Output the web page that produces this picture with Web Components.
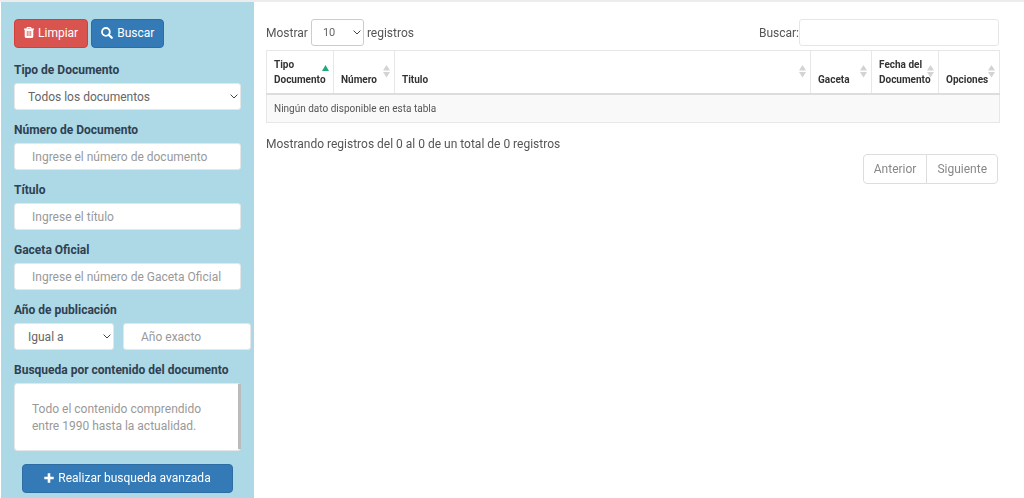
<!DOCTYPE html>
<html lang="es">
<head>
<meta charset="utf-8">
<meta name="viewport" content="width=device-width, initial-scale=1">
<title>Documentos</title>
<style>
  body {
    margin: 0;
    font-family: Roboto, "Liberation Sans", sans-serif;
    font-size: 12px;
    line-height: 20px;
    color: #555;
    background: #fff;
  }
</style>
</head>
<body>
<documents-page>
  <search-sidebar slot="sidebar"></search-sidebar>
  <documents-table></documents-table>
</documents-page>

<script>
// Rules shared by every component that draws form controls
const controlStyles = `
  * { box-sizing: border-box; }
  input, select, textarea, button { font: inherit; }
  input, select, textarea {
    display: block; width: 100%; margin: 0;
    border: 1px solid var(--control-border, #e5e6e7);
    border-radius: 3px; background: #fff; color: #555; outline: none;
  }
  input { height: 27px; padding: 0 17px; }
  textarea { height: 68px; padding: 17px; line-height: 17px; resize: none; }
  ::placeholder { color: #999; opacity: 1; }
  select { height: 27px; padding: 0 20px 0 13px; appearance: none; color: #666; }
`;

const icons = {
  trash: '<svg width="10" height="11" viewBox="0 0 10 11"><path fill="#fff" fill-rule="evenodd" d="M3 0h4l.7 1.500H10v1.300h-.7V9.600Q9.300 11 8 11H2Q.7 11 .7 9.600V2.800H0V1.500h2.300zM3.800.9l-.3.6h3l-.3-.6zM2.800 4v5h.8V4zM4.600 4v5h.8V4zM6.400 4v5h.8V4z"/></svg>',
  search: '<svg width="12" height="12" viewBox="0 0 12 12"><path fill="none" stroke="#fff" stroke-width="1.800" d="M8.800 4.900a3.900 3.900 0 1 1-7.800 0a3.900 3.900 0 0 1 7.800 0z"/><path stroke="#fff" stroke-width="2.200" stroke-linecap="round" d="M8.200 8.200l2.600 2.600"/></svg>',
  plus: '<svg width="10" height="10" viewBox="0 0 10 10"><path fill="none" stroke="#fff" stroke-width="2.600" stroke-linejoin="round" d="M5 .3v9.400M.3 5h9.400"/></svg>',
  chevron: '<svg width="8" height="5" viewBox="0 0 8 5"><path fill="none" stroke="#444" d="M.6.6L4 4L7.400.6"/></svg>'
};

class DocumentsPage extends HTMLElement {
  constructor() {
    super();
    this.attachShadow({ mode: 'open' }).innerHTML = `
      <style>
        :host {
          display: grid; grid-template-columns: 253px minmax(0, 1fr);
          min-height: 100vh; box-sizing: border-box;
          border-top: 2px solid #ececec; padding-left: 1px;
        }
        aside { background: #add8e6; }
        main { padding: 17px 24px 24px 12px; }
      </style>
      <aside><slot name="sidebar"></slot></aside>
      <main><slot></slot></main>
    `;
  }
}

class IconButton extends HTMLElement {
  connectedCallback() {
    if (this.shadowRoot) return;
    this.attachShadow({ mode: 'open' }).innerHTML = `
      <style>
        :host { display: block; }
        button {
          display: flex; align-items: center; justify-content: center; gap: 4px;
          width: 100%; height: 29px; padding: 0 9px 2px;
          font: inherit; color: #fff; cursor: pointer;
          background: #337ab7; border: 1px solid #2e6da4; border-radius: 4px;
        }
        :host([variant="danger"]) button { background: #d9534f; border-color: #d43f3a; }
        svg { flex: none; }
      </style>
      <button type="button">${icons[this.getAttribute('icon')]}<span><slot></slot></span></button>
    `;
  }
}

// One labelled control: <form-field label kind="input|select|textarea">
class FormField extends HTMLElement {
  connectedCallback() {
    if (this.shadowRoot) return;
    const label = this.getAttribute('label');
    const labelHtml = label ? `<label for="control">${label}</label>` : '';
    this.attachShadow({ mode: 'open' }).innerHTML = `
      <style>
        ${controlStyles}
        :host { display: block; }
        label { display: block; margin-bottom: 3px; font-weight: 700; color: #2f4050; white-space: nowrap; }
        .select { display: grid; align-items: center; }
        .select > * { grid-area: 1 / 1; }
        .select svg { justify-self: end; margin-right: 3px; pointer-events: none; }
      </style>
      ${labelHtml}
      ${this.getControl()}
    `;
  }

  getControl() {
    const placeholder = this.getAttribute('placeholder') || '';
    const aria = this.hasAttribute('label') ? '' : `aria-label="${this.getAttribute('name')}"`;
    switch (this.getAttribute('kind')) {
      case 'select':
        return `<div class="select">
          <select id="control" ${aria}><option>${this.getAttribute('value')}</option></select>
          ${icons.chevron}
        </div>`;
      case 'textarea':
        return `<textarea id="control" placeholder="${placeholder}" ${aria}></textarea>`;
      default:
        return `<input id="control" type="text" placeholder="${placeholder}" ${aria}>`;
    }
  }
}

class SearchSidebar extends HTMLElement {
  constructor() {
    super();
    this.attachShadow({ mode: 'open' }).innerHTML = `
      <style>
        :host { display: block; padding: 17px 13px 5px 13px; }
        form { display: flex; flex-direction: column; gap: 10px; }
        .actions { display: flex; gap: 3px; margin-bottom: 2px; }
        .year { display: grid; grid-template-columns: 100px 128px; gap: 9px; align-items: end; }
        .content { display: grid; }
        .content > * { grid-area: 1 / 1; }
        .thumb { justify-self: end; align-self: end; width: 3px; height: 65px; margin-bottom: 2px; background: #bbb; pointer-events: none; }
        .advanced { margin: 3px 8px 0; }
      </style>
      <form>
        <div class="actions">
          <icon-button icon="trash" variant="danger">Limpiar</icon-button>
          <icon-button icon="search">Buscar</icon-button>
        </div>
        <form-field label="Tipo de Documento" kind="select" value="Todos los documentos"></form-field>
        <form-field label="Número de Documento" placeholder="Ingrese el número de documento"></form-field>
        <form-field label="Título" placeholder="Ingrese el título"></form-field>
        <form-field label="Gaceta Oficial" placeholder="Ingrese el número de Gaceta Oficial"></form-field>
        <div class="year">
          <form-field label="Año de publicación" kind="select" value="Igual a"></form-field>
          <form-field name="Año" placeholder="Año exacto"></form-field>
        </div>
        <div class="content">
          <form-field label="Busqueda por contenido del documento" kind="textarea"
            placeholder="Todo el contenido comprendido entre 1990 hasta la actualidad."></form-field>
          <div class="thumb"></div>
        </div>
        <icon-button class="advanced" icon="plus">Realizar busqueda avanzada</icon-button>
      </form>
    `;
  }
}

class SortIcon extends HTMLElement {
  connectedCallback() {
    if (this.shadowRoot) return;
    const arrows = this.getAttribute('order') === 'asc'
      ? '<path fill="#23a777" d="M3.500 0L7 6H0z"/>'
      : '<path fill="#d3d3d3" d="M3.500 0L7 5.500H0zM0 7h7L3.500 12.500z"/>';
    this.attachShadow({ mode: 'open' }).innerHTML = `
      <style>
        :host { display: block; position: absolute; right: 4px; bottom: 15px; line-height: 0; }
      </style>
      <svg width="7" height="13" viewBox="0 0 7 13">${arrows}</svg>
    `;
  }
}

class DocumentsTable extends HTMLElement {
  constructor() {
    super();
    this.attachShadow({ mode: 'open' }).innerHTML = `
      <style>
        ${controlStyles}
        :host { display: block; }
        .toolbar { display: flex; justify-content: space-between; align-items: center; margin-bottom: 4px; padding-right: 1px; }
        .length { display: flex; align-items: center; gap: 3px; }
        .select { display: grid; align-items: center; width: 53px; --control-border: #ccc; }
        .select > * { grid-area: 1 / 1; }
        .select select { padding-left: 11px; font-size: 11px; }
        .select svg { justify-self: end; margin-right: 3px; pointer-events: none; }
        .filter { display: flex; align-items: center; }
        .filter input { width: 200px; }
        table { width: 100%; border-collapse: collapse; table-layout: fixed; font-size: 10px; }
        th, td { border: 1px solid #e7e7e7; padding: 6px 7px; text-align: left; line-height: 15px; }
        th { position: relative; vertical-align: bottom; border-bottom: 2px solid #ddd; color: #333; font-weight: 700; }
        td { background: #f9f9f9; }
        .w61 { width: 61px; }
        .w67 { width: 67px; }
        .info { margin: 11px 0 0; }
        .pages { display: flex; justify-content: flex-end; margin: 0 2px 0 0; padding: 0; list-style: none; }
        .pages a {
          display: block; padding: 4px 10px; border: 1px solid #ddd;
          color: #888; text-decoration: none;
        }
        .pages li + li { margin-left: -1px; }
        .pages li:first-child a { border-radius: 4px 0 0 4px; }
        .pages li:last-child a { border-radius: 0 4px 4px 0; }
      </style>
      <div class="toolbar">
        <div class="length">
          <label for="length">Mostrar</label>
          <div class="select">
            <select id="length"><option>10</option><option>25</option><option>50</option></select>
            ${icons.chevron}
          </div>
          <label for="length">registros</label>
        </div>
        <div class="filter">
          <label for="filter">Buscar:</label>
          <input id="filter" type="search">
        </div>
      </div>
      <table>
        <colgroup>
          <col class="w67"><col class="w61"><col><col class="w61"><col class="w67"><col class="w61">
        </colgroup>
        <thead>
          <tr>
            <th>Tipo Documento<sort-icon order="asc"></sort-icon></th>
            <th>Número<sort-icon></sort-icon></th>
            <th>Titulo<sort-icon></sort-icon></th>
            <th>Gaceta<sort-icon></sort-icon></th>
            <th>Fecha del Documento<sort-icon></sort-icon></th>
            <th>Opciones<sort-icon></sort-icon></th>
          </tr>
        </thead>
        <tbody>
          <tr><td colspan="6">Ningún dato disponible en esta tabla</td></tr>
        </tbody>
      </table>
      <p class="info">Mostrando registros del 0 al 0 de un total de 0 registros</p>
      <ul class="pages">
        <li><a href="#">Anterior</a></li>
        <li><a href="#">Siguiente</a></li>
      </ul>
    `;
  }
}

customElements.define('icon-button', IconButton);
customElements.define('form-field', FormField);
customElements.define('sort-icon', SortIcon);
customElements.define('search-sidebar', SearchSidebar);
customElements.define('documents-table', DocumentsTable);
customElements.define('documents-page', DocumentsPage);
</script>
</body>
</html>
